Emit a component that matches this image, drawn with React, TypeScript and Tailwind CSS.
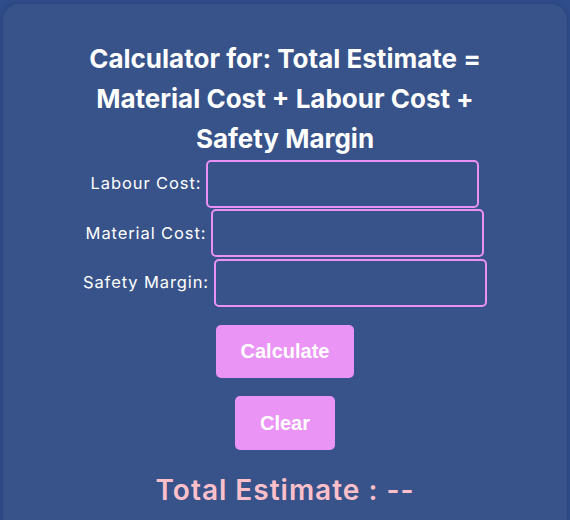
import { useState } from "react";

const Field = ({ label, value, onChange }: { label: string; value: string; onChange: (v: string) => void }) => {
  return (
    <div className="flex items-center justify-center gap-[5px] h-[49.5px]">
      <label className="text-white text-[16.5px] tracking-[0.9px]">{label}</label>
      <input
        type="number"
        value={value}
        onChange={(e) => onChange(e.target.value)}
        className="w-[273px] h-[48px] border-2 border-[#ea92f4] rounded-[5px] bg-transparent text-white px-2 outline-none"
      />
    </div>
  );
};

const App = () => {
  const [labour, setLabour] = useState("");
  const [material, setMaterial] = useState("");
  const [margin, setMargin] = useState("");
  const [total, setTotal] = useState("--");

  const calculate = () => {
    const sum = (parseFloat(labour) || 0) + (parseFloat(material) || 0) + (parseFloat(margin) || 0);
    setTotal(sum.toString());
  };

  const clear = () => {
    setLabour("");
    setMaterial("");
    setMargin("");
    setTotal("--");
  };

  return (
    <div className="w-[570px] h-[520px] overflow-hidden bg-[#2f4d8b] pt-[4px] px-[3px] font-['Inter',sans-serif]">
      <div className="h-[560px] rounded-[16px] bg-[#37538a] shadow-[0_0_6px_rgba(0,0,0,0.15)] flex flex-col items-center pt-[35px]">
        <h2 className="text-white text-[26px] font-bold leading-[40px] text-center w-[440px]">
          Calculator for: Total Estimate = Material Cost + Labour Cost + Safety Margin
        </h2>
        <div className="flex flex-col">
          <Field label="Labour Cost:" value={labour} onChange={setLabour} />
          <Field label="Material Cost:" value={material} onChange={setMaterial} />
          <Field label="Safety Margin:" value={margin} onChange={setMargin} />
        </div>
        <button
          onClick={calculate}
          className="mt-[17px] w-[138px] h-[53px] rounded-[5px] bg-[#ea94f5] text-white text-[20px] font-bold font-['Liberation_Sans',Arial,sans-serif]"
        >
          Calculate
        </button>
        <button
          onClick={clear}
          className="mt-[18px] w-[100px] h-[54px] rounded-[5px] bg-[#ea94f5] text-white text-[20px] font-bold font-['Liberation_Sans',Arial,sans-serif]"
        >
          Clear
        </button>
        <p className="mt-[20px] text-[#fdc0cb] text-[28px] font-semibold tracking-[1px] leading-[40px]">
          Total Estimate : {total}
        </p>
      </div>
    </div>
  );
};

export default App;
